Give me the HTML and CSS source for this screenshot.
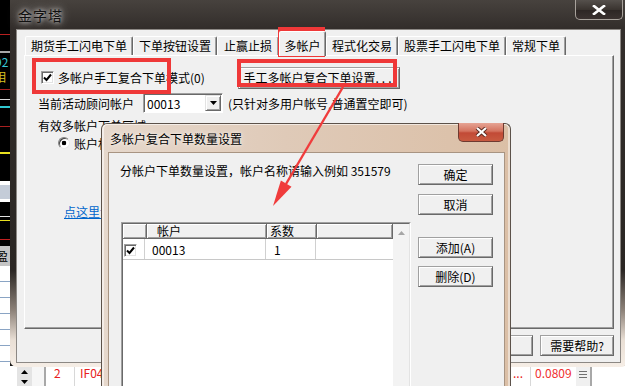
FILE: index.html
```html
<!DOCTYPE html>
<html lang="zh-CN">
<head>
<meta charset="utf-8">
<title>金字塔</title>
<link rel="stylesheet" href="styles.css">
</head>
<body>
<div class="desk">
  <div class="app">
    <div class="app-top">
      <div class="chart">
        <div class="chart-dark">
          <div class="ct c1">92</div>
          <div class="ct c2">相</div>
        </div>
        <div class="chart-tab">盈</div>
        <div class="chart-grid"></div>
      </div>
      <div class="app-fill"></div>
    </div>
    <div class="app-bottom">
      <div class="bc w17"></div>
      <div class="bc sbar">
        <svg width="7" height="4" viewBox="0 0 7 4"><polygon points="3.5,0 7,4 0,4" fill="#000"/></svg>
        <svg width="7" height="4" viewBox="0 0 7 4"><polygon points="0,0 7,0 3.5,4" fill="#000"/></svg>
      </div>
      <div class="bc w12"></div>
      <div class="bc sep2"></div>
      <div class="bc num">2</div>
      <div class="bc sep1"></div>
      <div class="bc code">IF04</div>
      <div class="bc dots3">...</div>
      <div class="bc sep1"></div>
      <div class="bc price">0.0809</div>
      <div class="bc menu"><span></span><span></span><span></span></div>
      <div class="bc sep2"></div>
      <div class="bc rest"></div>
    </div>
  </div>

  <div class="main">
    <div class="titlebar">
      <span class="wtitle">金字塔</span>
      <div class="wclose"><svg width="14" height="10" viewBox="0 0 14 10"><path d="M2 1 L12 9 M12 1 L2 9" stroke="#fff" stroke-width="2.6" stroke-linecap="square"/></svg></div>
    </div>
    <div class="client">
      <div class="tabs">
        <div class="tab t1">期货手工闪电下单</div>
        <div class="tab t2">下单按钮设置</div>
        <div class="tab t3">止赢止损</div>
        <div class="tab t4 sel">多帐户</div>
        <div class="tab t5">程式化交易</div>
        <div class="tab t6">股票手工闪电下单</div>
        <div class="tab t7">常规下单</div>
      </div>
      <div class="panel">
        <div class="r1">
          <label class="chk">
            <span class="cbox"><svg width="9" height="9" viewBox="0 0 9 9"><polyline points="1,4.5 3.5,7 8,1.5" fill="none" stroke="#000" stroke-width="2"/></svg></span>
            <span>多帐户手工复合下单模式(0)</span>
          </label>
          <div class="btn btn-setup">手工多帐户复合下单设置<span class="dots">...</span></div>
        </div>
        <div class="row r2">
          <span class="lbl">当前活动顾问帐户</span>
          <div class="combo">
            <span class="combo-val">00013</span>
            <span class="combo-btn"><svg width="7" height="4" viewBox="0 0 7 4"><polygon points="0,0 7,0 3.5,4" fill="#000"/></svg></span>
          </div>
          <span class="hint">(只针对多用户帐号,普通置空即可)</span>
        </div>
        <div class="row r3">有效多帐户下单区域</div>
        <div class="row r4"><span class="radio"></span><span>账户相同</span></div>
        <div class="row r5"><a class="link">点这里设置</a></div>
      </div>
      <div class="footer">
        <div class="btn fbtn">关闭</div>
        <div class="btn fbtn">需要帮助?</div>
      </div>
    </div>
  </div>

  <div class="dlg">
    <div class="dtitlebar">
      <span class="dtitle">多帐户复合下单数量设置</span>
      <div class="dclose"><svg width="13" height="10" viewBox="0 0 13 10"><path d="M2 1 L11 9 M11 1 L2 9" stroke="#5a2a20" stroke-width="4"/><path d="M2 1 L11 9 M11 1 L2 9" stroke="#fff" stroke-width="2.2"/></svg></div>
    </div>
    <div class="dclient">
      <div class="dleft">
        <div class="dtext">分帐户下单数量设置，帐户名称请输入例如 351579</div>
        <div class="list">
          <div class="list-in">
            <div class="list-main">
              <div class="lhead">
                <div class="hc hc1"></div>
                <div class="hc hc2">帐户</div>
                <div class="hc hc3">系数</div>
                <div class="hc hc4"></div>
              </div>
              <div class="lrow">
                <div class="lc lc1"><span class="cbox"><svg width="9" height="9" viewBox="0 0 9 9"><polyline points="1,4.5 3.5,7 8,1.5" fill="none" stroke="#000" stroke-width="2"/></svg></span></div>
                <div class="lc lc2">00013</div>
                <div class="lc lc3">1</div>
                <div class="lc lc4"></div>
              </div>
            </div>
            <div class="vscroll">
              <div class="sbtn"><svg width="7" height="4" viewBox="0 0 7 4"><polygon points="3.5,0 7,4 0,4" fill="#a6a6a6"/></svg></div>
            </div>
          </div>
        </div>
      </div>
      <div class="dright">
        <div class="btn dbtn">确定</div>
        <div class="btn dbtn b2">取消</div>
        <div class="btn dbtn b3">添加(A)</div>
        <div class="btn dbtn b4">删除(D)</div>
      </div>
    </div>
  </div>

  <svg class="arrow" width="625" height="386" viewBox="0 0 625 386">
    <line x1="343" y1="87" x2="286" y2="184" stroke="#f03c3c" stroke-width="2.4"/>
    <polygon points="273,206 291.5,186.7 280.9,180.5" fill="#f03c3c"/>
  </svg>
  <div class="mark mk1"></div>
  <div class="mark mk2"></div>
  <div class="mark mk3"></div>
</div>
</body>
</html>
```

FILE: styles.css
```css
* { box-sizing: border-box; margin: 0; padding: 0; }
html, body { width: 625px; height: 386px; overflow: hidden; }
body {
  font-family: "Noto Sans CJK SC", "Noto Sans", sans-serif;
  font-size: 12px;
  color: #000;
  background: #111;
}
.desk { position: relative; width: 625px; height: 386px; overflow: hidden; }

/* background trading app */
.app { display: grid; grid-template-rows: 366px 20px; height: 386px; }
.app-top { display: flex; min-height: 0; }
.chart { width: 10px; display: flex; flex-direction: column; overflow: hidden; }
.chart-dark {
  height: 246px;
  padding-top: 54px;
  background: linear-gradient(to bottom,
    #000 0 34px, #b82020 34px 35px, #000 35px 51px, #a8a8a8 51px 53px,
    #000 53px 89px, #a82020 89px 90px, #000 90px 99px, #d8d8d8 99px 100px,
    #000 100px 106px, #30c8d0 106px 108px, #000 108px 126px, #a82020 126px 127px,
    #000 127px 152px, #e8e020 152px 154px, #000 154px 181px, #fff 181px 185px,
    #c4ccd8 185px 199px, #fff 199px 202px, #000 202px 216px, #e0e0e0 216px 217px,
    #000 217px 220px, #e8e020 220px 221px, #000 221px 239px, #c02020 239px 240px, #000 240px);
}
.ct { line-height: 15px; height: 15px; white-space: nowrap; }
.c1 { color: #38c8d8; text-indent: -5px; }
.c2 { color: #d8c020; text-indent: -6px; }
.chart-tab { height: 20px; background: #c4c4c4; line-height: 20px; text-indent: -4px; white-space: nowrap; overflow: hidden; }
.chart-grid { flex: 1; background: repeating-linear-gradient(to bottom, #fff 0 15px, #8aa4c4 15px 16px); }
.app-fill { flex: 1; background: #1b1a19; }

.app-bottom { display: flex; background: #fff; line-height: 14px; overflow: hidden; }
.bc { flex: none; height: 20px; white-space: nowrap; overflow: hidden; }
.w17 { width: 17px; background: #fff; }
.sbar { width: 15px; background: #e4e4e4; display: flex; flex-direction: column; align-items: center; padding-top: 4px; gap: 6px; }
.w12 { width: 12px; background: #f6f6f6; }
.sep2 { width: 2px; background: #a8a8a8; }
.sep1 { width: 1px; background: #d8d8d8; }
.num { width: 28px; color: #e82020; padding-left: 8px; }
.code { width: 435px; color: #e82020; padding-left: 5px; }
.dots3 { width: 20px; color: #e82020; padding-left: 3px; }
.price { width: 45px; color: #f03030; padding-left: 4px; }
.menu { width: 14px; display: flex; flex-direction: column; align-items: center; gap: 2px; padding-top: 5px; background: #f0f0f0; }
.menu span { width: 8px; height: 1px; background: #707070; }
.rest { flex: 1; }

/* main window */
.main {
  position: absolute; left: 10px; top: 0;
  width: 618px; height: 367px;
  padding: 0 7px 4px 6px;
  display: flex; flex-direction: column;
  border-radius: 0 0 7px 7px;
  background: linear-gradient(to bottom, #47423e 0, #332e2b 28px, #2a2623 270px, #8c8178 310px, #e9dfd5 340px, #f6eee6 367px);
}
.titlebar { height: 29px; flex: none; display: flex; align-items: center; }
.wtitle {
  padding-left: 2px; font-size: 14px; letter-spacing: 1px; color: #111;
  text-shadow: 0 0 4px rgba(255,255,255,.75), 0 0 9px rgba(255,255,255,.55), 0 0 14px rgba(255,255,255,.35);
}
.wclose {
  margin-left: auto; margin-right: -2px; align-self: flex-start;
  width: 48px; height: 20px;
  display: flex; align-items: center; justify-content: center;
  border: 1px solid #a8a29c; border-top: none; border-radius: 0 0 5px 5px;
  background: linear-gradient(to bottom, #55504c, #3a3430 50%, #2c2624 51%, #3a3230);
}
.client {
  flex: 1; border: 1px solid #8c8884; background: #f0f0f0;
  padding: 0 6px 0 7px; display: flex; flex-direction: column;
}
.tabs { display: flex; align-items: flex-end; height: 24px; margin-top: 1px; padding-left: 1px; flex: none; }
.tab {
  height: 19px; line-height: 18px; text-align: center; white-space: nowrap;
  border: 1px solid; border-bottom: none;
  border-color: #fff #696969 transparent #fff;
  border-radius: 2px 2px 0 0;
  box-shadow: inset -1px 0 #a0a0a0;
  background: #f0f0f0;
}
.tab.sel { height: 25px; margin-bottom: -1px; padding-top: 5px; position: relative; z-index: 1; }
.t1 { width: 108px; } .t2 { width: 84px; } .t3 { width: 62px; } .t4 { width: 47px; }
.t5 { width: 72px; } .t6 { width: 108px; } .t7 { width: 60px; }
.panel {
  height: 274px; flex: none;
  border: 1px solid; border-color: #fff #696969 #696969 #fff;
  box-shadow: inset -1px -1px #a0a0a0;
}
.row { display: flex; align-items: center; white-space: nowrap; }
.r1 { display: grid; grid-template-columns: 197px 162px; align-items: center; height: 23px; margin-top: 10px; padding-left: 16px; }
.chk { display: flex; align-items: center; gap: 4px; white-space: nowrap; }
.cbox {
  width: 13px; height: 13px; flex: none; background: #fff;
  border: 1px solid; border-color: #a0a0a0 #fff #fff #a0a0a0;
  box-shadow: inset 1px 1px #696969, inset -1px -1px #e3e3e3;
  display: flex; align-items: center; justify-content: center;
}
.btn {
  display: flex; align-items: center; justify-content: center;
  background: #f0f0f0; white-space: nowrap; line-height: 14px;
  border: 1px solid; border-color: #a0a0a0 #696969 #696969 #a0a0a0;
  box-shadow: inset 1px 1px #fff, inset -1px -1px #a0a0a0;
}
.btn-setup { height: 22px; }
.dots { letter-spacing: 3px; }
.r2 { height: 20px; margin-top: 4px; padding-left: 13px; }
.lbl { width: 105px; }
.combo {
  width: 80px; height: 20px; display: flex; align-items: center; background: #fff;
  border: 1px solid; border-color: #a0a0a0 #fff #fff #a0a0a0;
  box-shadow: inset 1px 1px #696969;
}
.combo-val { flex: 1; padding-left: 3px; }
.combo-btn {
  width: 16px; height: 16px; margin-right: 1px;
  display: flex; align-items: center; justify-content: center; background: #f0f0f0;
  border: 1px solid; border-color: #e3e3e3 #696969 #696969 #e3e3e3;
  box-shadow: inset 1px 1px #fff, inset -1px -1px #a0a0a0;
}
.hint { margin-left: 5px; }
.r3 { height: 14px; margin-top: 6px; padding-left: 13px; line-height: 14px; }
.r4 { height: 14px; margin-top: 3px; padding-left: 33px; gap: 4px; }
.radio {
  width: 12px; height: 12px; border-radius: 50%; flex: none;
  background: #fff radial-gradient(circle, #000 0 2px, transparent 2.6px);
  border: 1px solid; border-color: #808080 #e8e8e8 #e8e8e8 #808080;
  box-shadow: inset 1px 1px #404040;
}
.r5 { height: 13px; margin-top: 55px; padding-left: 39px; }
.link { color: #0066cc; text-decoration: underline; }
.footer { display: flex; justify-content: flex-end; gap: 7px; margin-top: 6px; }
.fbtn { width: 74px; height: 21px; }

/* dialog */
.dlg {
  position: absolute; left: 101px; top: 123px;
  width: 410px; height: 275px;
  border: 1px solid #5c524a; border-bottom: none;
  border-radius: 6px 6px 0 0;
  padding: 0 5px 0 6px;
  display: flex; flex-direction: column;
  background: linear-gradient(to right, #e6d8cc 0, #dfcab8 45%, #dbbfa6 100%);
  box-shadow: inset 2px 0 rgba(255,255,255,.55), inset -2px 0 rgba(255,255,255,.45), inset 0 1px rgba(255,255,255,.6);
}
.dtitlebar { height: 28px; flex: none; display: flex; align-items: center; }
.dtitle { padding-left: 2px; white-space: nowrap; text-shadow: 0 0 3px rgba(255,255,255,.8), 0 0 7px rgba(255,255,255,.7); }
.dclose {
  margin-left: auto; margin-right: 1px; margin-top: -1px; align-self: flex-start;
  width: 46px; height: 19px; position: relative;
  display: flex; align-items: center; justify-content: center;
  border: 1px solid #6e3a30; border-top: none; border-radius: 0 0 5px 5px;
  background: linear-gradient(to bottom, #e6a494, #d4735f 45%, #c24a36 55%, #c85a40);
}
.dclient {
  flex: 1; background: #f0f0f0; border: 1px solid #a89482;
  padding: 11px 0 0 11px; display: flex;
}
.dleft { width: 298px; flex: none; }
.dtext { line-height: 14px; white-space: nowrap; }
.list {
  margin: 44px 0 0 1px; width: 290px; height: 200px;
  border: 1px solid; border-color: #a0a0a0 #fff #fff #a0a0a0;
}
.list-in {
  height: 100%; display: flex; background: #fff;
  border: 1px solid; border-color: #696969 #e3e3e3 #e3e3e3 #696969;
}
.list-main { width: 270px; flex: none; }
.lhead { display: flex; height: 15px; }
.hc {
  height: 15px; flex: none; background: #f0f0f0; line-height: 13px; white-space: nowrap;
  border-right: 1px solid #696969; border-bottom: 1px solid #696969;
  box-shadow: inset 1px 1px #fff, inset -1px -1px #a0a0a0;
}
.hc1 { width: 24px; } .hc2 { width: 120px; padding-left: 10px; } .hc3 { width: 50px; padding-left: 3px; } .hc4 { width: 76px; }
.lrow { display: flex; height: 21px; border-bottom: 1px solid #c8c8c8; }
.lc { flex: none; height: 20px; border-right: 1px solid #d0d0d0; line-height: 20px; padding-top: 1px; }
.lc1 { width: 22px; padding: 5px 0 0 1px; }
.lc2 { width: 121px; padding-left: 7px; }
.lc3 { width: 50px; padding-left: 8px; }
.lc4 { width: 77px; border-right: none; }
.vscroll { flex: 1; background: #f3f3f3; }
.sbtn { height: 17px; display: flex; align-items: center; justify-content: center; }
.dright { width: 75px; flex: none; display: flex; flex-direction: column; }
.dbtn { height: 21px; }
.b2 { margin-top: 9px; } .b3 { margin-top: 22px; } .b4 { margin-top: 8px; }

/* annotations */
.arrow { position: absolute; left: 0; top: 0; pointer-events: none; }
.mark { position: absolute; border: 4px solid #ef3838; pointer-events: none; }
.mk1 { left: 32px; top: 58px; width: 139px; height: 36px; }
.mk2 { left: 278px; top: 27px; width: 47px; height: 30px; }
.mk3 { left: 237px; top: 59px; width: 160px; height: 28px; }
```
